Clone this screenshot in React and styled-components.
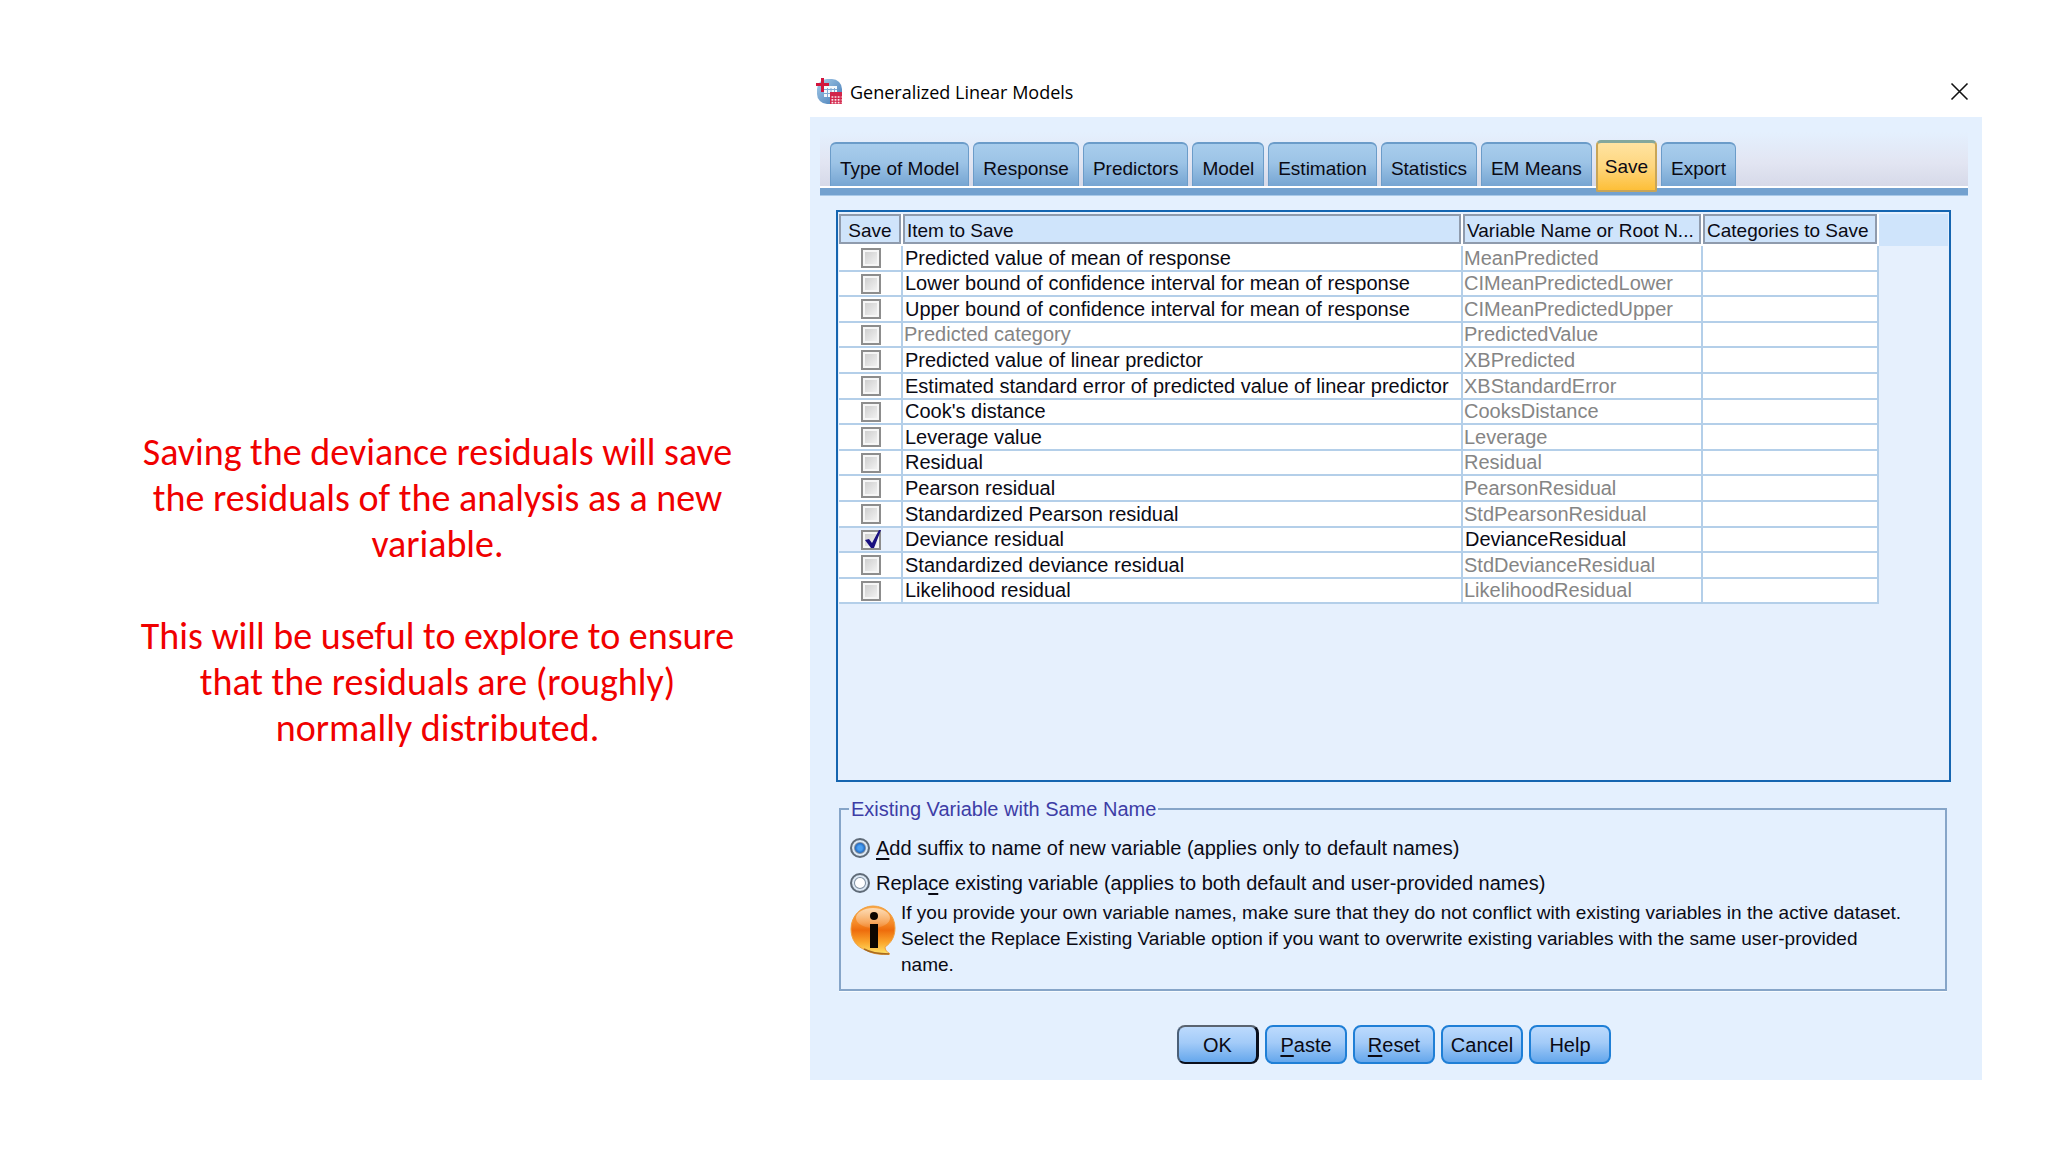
import React from "react"
import styled, { createGlobalStyle, css } from "styled-components"

const GlobalStyle = createGlobalStyle`
  * {
    box-sizing: border-box;
  }
  body {
    margin: 0;
    background: #fff;
    color: #0a0a14;
    font-family: "Liberation Sans", Arial, sans-serif;
    font-size: 20px;
  }
  button,
  input {
    font: inherit;
    color: inherit;
    margin: 0;
  }
`

const Slide = styled.main`
  min-height: 100vh;
  padding: 68px 66px 72px 65px;
  display: grid;
  grid-template-columns: 745fr 1172fr;
`

const Note = styled.div`
  align-self: center;
  padding: 32px 66px 0;
  color: #f00000;
  font-family: Carlito, Lato, sans-serif;
  font-size: 38px;
  line-height: 46px;
  text-align: center;
  p {
    margin: 0 0 46px;
  }
  p:last-child {
    margin: 0;
  }
`

const Dialog = styled.section`
  display: flex;
  flex-direction: column;
`

const TitleBar = styled.header`
  height: 49px;
  padding: 0 13px 2px 6px;
  display: flex;
  align-items: center;
  gap: 7px;
  h1 {
    flex: 1;
    margin: 0;
    color: #000;
    font-family: "Open Sans", "Noto Sans", sans-serif;
    font-size: 18px;
    font-weight: 400;
  }
`

const CloseButton = styled.button`
  display: flex;
  padding: 0;
  border: 0;
  background: none;
`

const Body = styled.div`
  flex: 1;
  padding: 15px 14px 16px 10px;
  display: flex;
  flex-direction: column;
  background: #e4f0fe;
`

const Tabs = styled.nav`
  height: 63px;
  padding-left: 10px;
  display: flex;
  align-items: flex-end;
  gap: 4px;
  border-bottom: 7px solid #73a1cf;
  background: linear-gradient(#e4f0fe 0, #e2e5f2 55%, #d5d8e7 100%);
  box-shadow: inset 0 -2px #fff, 0 1px #a9c9e8;
  font-size: 19px;
`

const Tab = styled.button`
  height: 44px;
  margin-bottom: 2px;
  padding: 8px 9px 0;
  border: 1px solid #6b9cc9;
  border-top-width: 2px;
  border-bottom: 0;
  border-radius: 6px 6px 0 0;
  background: linear-gradient(#a8cdec, #9cc3e6 45%, #76a5d2);
  white-space: nowrap;
  ${({ $active }) =>
    $active &&
    css`
      height: 52px;
      margin-bottom: -4px;
      padding: 0 7px;
      border: 2px solid #c9a556;
      border-top: 3px solid #84a79c;
      border-radius: 5px 5px 2px 2px;
      background: linear-gradient(#ffe3a1, #fed67e 50%, #fdbf38);
    `}
`

const TablePanel = styled.div`
  height: 572px;
  margin: 15px 17px 0 16px;
  padding: 2px 1px;
  border: 2px solid #1565b0;
  background: #e6f0fd;
`

const Table = styled.table`
  width: 100%;
  table-layout: fixed;
  border-collapse: separate;
  border-spacing: 0;
  text-align: left;
  white-space: nowrap;
  th {
    height: 32px;
    padding: 0 2px 2px 0;
    background: #fff;
    font-size: 19px;
    font-weight: 400;
  }
  thead td {
    background: #cfe4fb;
  }
`

const HeadCell = styled.div`
  height: 30px;
  padding: 0 2px;
  overflow: hidden;
  border: 2px solid #8f9bad;
  background: #cfe4fb;
  line-height: 29px;
  text-align: ${({ $center }) => ($center ? "center" : "left")};
`

const Row = styled.tr`
  height: ${({ $short }) => ($short ? 25 : 26)}px;
`

const Cell = styled.td`
  padding: 0 0 0 ${({ $muted }) => ($muted ? 1 : 2)}px;
  border-right: 2px solid #b4cfe9;
  border-bottom: 2px solid #b4cfe9;
  background: ${({ $picked }) => ($picked ? "#e9f1fd" : "#fff")};
  color: ${({ $muted }) => ($muted ? "#858585" : "inherit")};
  line-height: 23px;
`

const Check = styled.span`
  position: relative;
  display: block;
  width: 20px;
  height: 20px;
  margin: 0 auto;
  input {
    appearance: none;
    display: block;
    width: 20px;
    height: 20px;
    border: 2px solid #8d8d8d;
    background: linear-gradient(135deg, #c9c9c9, #f7f7f7);
    box-shadow: inset 0 0 0 2px #f6f6f6;
  }
  svg {
    position: absolute;
    left: 3px;
    top: -1px;
    pointer-events: none;
  }
`

const Group = styled.fieldset`
  min-width: 0;
  margin: 15px 21px 0 19px;
  padding: 15px 8px 11px 9px;
  border: 2px solid #86a5c8;
  box-shadow: 0 1px #f6fbff;
  legend {
    margin-left: -1px;
    padding: 0 2px;
    color: #3d3da6;
    line-height: 24px;
  }
`

const Option = styled.label`
  display: flex;
  align-items: center;
  gap: 6px;
  height: 24px;
  margin-bottom: 11px;
  input {
    appearance: none;
    width: 20px;
    height: 20px;
    border: 2px solid #5f6b78;
    border-radius: 50%;
    background: #fff;
    box-shadow: inset 0 0 0 2px #dce8f4, inset 0 0 0 3px #7f8fa0;
  }
  input:checked {
    background: radial-gradient(circle, #4ba0f2 20%, #1c63bd 45%, #b9d2ee 60%);
  }
`

const Info = styled.div`
  display: flex;
  gap: 5px;
  margin-top: -6px;
  font-size: 19px;
  p {
    margin: 0;
    line-height: 26px;
  }
  svg {
    flex: none;
    margin-top: 5px;
  }
`

const Actions = styled.footer`
  margin-top: auto;
  display: flex;
  justify-content: center;
  gap: 6px;
`

const Action = styled.button`
  width: 82px;
  height: 39px;
  padding: 2px 0 0;
  border: 2px solid #1f7fd6;
  border-radius: 8px;
  background: linear-gradient(#bcdafd, #a3cbf8 45%, #65a7ec);
  ${({ $primary }) =>
    $primary &&
    css`
      border-color: #5a6470 #0a0f1c #0a0f1c #4a5f78;
      border-right-width: 3px;
    `}
`

const Key = styled.span`
  text-decoration: underline;
  text-decoration-thickness: 2px;
  text-underline-offset: 3px;
`

const tabs = [
  "Type of Model",
  "Response",
  "Predictors",
  "Model",
  "Estimation",
  "Statistics",
  "EM Means",
  "Save",
  "Export",
]

const items = [
  { label: "Predicted value of mean of response", name: "MeanPredicted" },
  {
    label: "Lower bound of confidence interval for mean of response",
    name: "CIMeanPredictedLower",
  },
  {
    label: "Upper bound of confidence interval for mean of response",
    name: "CIMeanPredictedUpper",
  },
  { label: "Predicted category", name: "PredictedValue", disabled: true },
  { label: "Predicted value of linear predictor", name: "XBPredicted" },
  {
    label: "Estimated standard error of predicted value of linear predictor",
    name: "XBStandardError",
  },
  { label: "Cook's distance", name: "CooksDistance" },
  { label: "Leverage value", name: "Leverage" },
  { label: "Residual", name: "Residual" },
  { label: "Pearson residual", name: "PearsonResidual" },
  { label: "Standardized Pearson residual", name: "StdPearsonResidual" },
  { label: "Deviance residual", name: "DevianceResidual", saved: true },
  { label: "Standardized deviance residual", name: "StdDevianceResidual" },
  { label: "Likelihood residual", name: "LikelihoodResidual" },
]

function AppIcon() {
  return (
    <svg width="27" height="27" viewBox="0 0 27 27" aria-hidden="true">
      <defs>
        <linearGradient id="globe" x1="0" y1="0" x2="1" y2="1">
          <stop offset="0" stopColor="#a9cdea" />
          <stop offset="1" stopColor="#3f78b4" />
        </linearGradient>
      </defs>
      <rect x="1" y="1" width="25" height="25" rx="10" fill="url(#globe)" />
      <path d="M8 8h13v11H8z" fill="#f4f8fc" />
      <path
        d="M8 11.500h13M8 15.500h13M11.500 10v9M15 10v9M18.500 10v9"
        stroke="#7fa9d3"
        strokeWidth="1"
      />
      <path d="M5 0h3v5h5v3H8v6H5V8H0V5h5z" fill="#d2143c" />
      <path d="M14 14h12v12H14z" fill="#d2244a" />
      <path
        d="M15.500 19h10M15.500 21.800h10M15.500 24.600h10"
        stroke="#fbe3e8"
        strokeWidth="1.700"
        strokeDasharray="1.800 1.300"
      />
    </svg>
  )
}

function InfoIcon() {
  return (
    <svg width="46" height="50" viewBox="0 0 46 50" aria-hidden="true">
      <defs>
        <linearGradient id="bubble" x1="0" y1="0" x2="0" y2="1">
          <stop offset="0" stopColor="#f9a94a" />
          <stop offset="0.35" stopColor="#f58a28" />
          <stop offset="0.5" stopColor="#ee6c0c" />
          <stop offset="0.75" stopColor="#fba52c" />
          <stop offset="1" stopColor="#ffe56a" />
        </linearGradient>
        <linearGradient id="shine" x1="0" y1="0" x2="0" y2="1">
          <stop offset="0" stopColor="#fff" stopOpacity="0.6" />
          <stop offset="1" stopColor="#fff" stopOpacity="0.1" />
        </linearGradient>
      </defs>
      <path
        d="M23 1C35 1 45 10 45 23c0 9-4 15-10 19 0 3 2 5 5 7-9 1-18 0-24-4C6 42 1 34 1 24 1 11 11 1 23 1z"
        fill="url(#bubble)"
        stroke="#f0a040"
      />
      <path
        d="M14 44c7 4 15 5 25 5"
        fill="none"
        stroke="#a86a20"
        strokeWidth="1.500"
      />
      <ellipse cx="23" cy="13" rx="17" ry="10" fill="url(#shine)" />
      <circle cx="24" cy="11" r="4" fill="#0c0600" />
      <path d="M20 19h8v24h-8z" fill="#0c0600" />
    </svg>
  )
}

export default function App() {
  return (
    <>
      <GlobalStyle />
      <Slide>
        <Note>
          <p>
            Saving the deviance residuals will save the residuals of the
            analysis as a new variable.
          </p>
          <p>
            This will be useful to explore to ensure that the residuals are
            (roughly) normally distributed.
          </p>
        </Note>

        <Dialog>
          <TitleBar>
            <AppIcon />
            <h1>Generalized Linear Models</h1>
            <CloseButton type="button" aria-label="Close">
              <svg width="19" height="19" viewBox="0 0 19 19">
                <path
                  d="M1.500 1.500l16 16M17.500 1.500l-16 16"
                  stroke="#111"
                  strokeWidth="1.600"
                />
              </svg>
            </CloseButton>
          </TitleBar>

          <Body>
            <Tabs>
              {tabs.map(tab => (
                <Tab key={tab} type="button" $active={tab === "Save"}>
                  {tab}
                </Tab>
              ))}
            </Tabs>

            <TablePanel>
              <Table>
                <colgroup>
                  <col width="64" />
                  <col />
                  <col width="240" />
                  <col width="176" />
                  <col width="69" />
                </colgroup>
                <thead>
                  <tr>
                    <th>
                      <HeadCell $center>Save</HeadCell>
                    </th>
                    <th>
                      <HeadCell>Item to Save</HeadCell>
                    </th>
                    <th>
                      <HeadCell>Variable Name or Root N...</HeadCell>
                    </th>
                    <th>
                      <HeadCell>Categories to Save</HeadCell>
                    </th>
                    <td />
                  </tr>
                </thead>
                <tbody>
                  {items.map((item, i) => (
                    <Row key={item.name} $short={i % 5 === 1 || i % 5 === 3}>
                      <Cell $picked={item.saved}>
                        <Check>
                          <input
                            type="checkbox"
                            aria-label={item.label}
                            defaultChecked={item.saved}
                            disabled={item.disabled}
                          />
                          {item.saved && (
                            <svg width="18" height="20" viewBox="0 0 18 20">
                              <path
                                d="M1 11l4-1 3 4L15 1h2L10 19H7z"
                                fill="#1a1080"
                              />
                            </svg>
                          )}
                        </Check>
                      </Cell>
                      <Cell $muted={item.disabled}>{item.label}</Cell>
                      <Cell $muted={!item.saved}>{item.name}</Cell>
                      <Cell />
                      <td />
                    </Row>
                  ))}
                </tbody>
              </Table>
            </TablePanel>

            <Group>
              <legend>Existing Variable with Same Name</legend>
              <Option>
                <input type="radio" name="existing" defaultChecked />
                <span>
                  <Key>A</Key>dd suffix to name of new variable (applies only to
                  default names)
                </span>
              </Option>
              <Option>
                <input type="radio" name="existing" />
                <span>
                  Repla<Key>c</Key>e existing variable (applies to both default
                  and user-provided names)
                </span>
              </Option>
              <Info>
                <InfoIcon />
                <p>
                  If you provide your own variable names, make sure that they do
                  not conflict with existing variables in the active dataset.
                  <br />
                  Select the Replace Existing Variable option if you want to
                  overwrite existing variables with the same user-provided
                  <br />
                  name.
                </p>
              </Info>
            </Group>

            <Actions>
              <Action type="button" $primary>
                OK
              </Action>
              <Action type="button">
                <Key>P</Key>aste
              </Action>
              <Action type="button">
                <Key>R</Key>eset
              </Action>
              <Action type="button">Cancel</Action>
              <Action type="button">Help</Action>
            </Actions>
          </Body>
        </Dialog>
      </Slide>
    </>
  )
}
